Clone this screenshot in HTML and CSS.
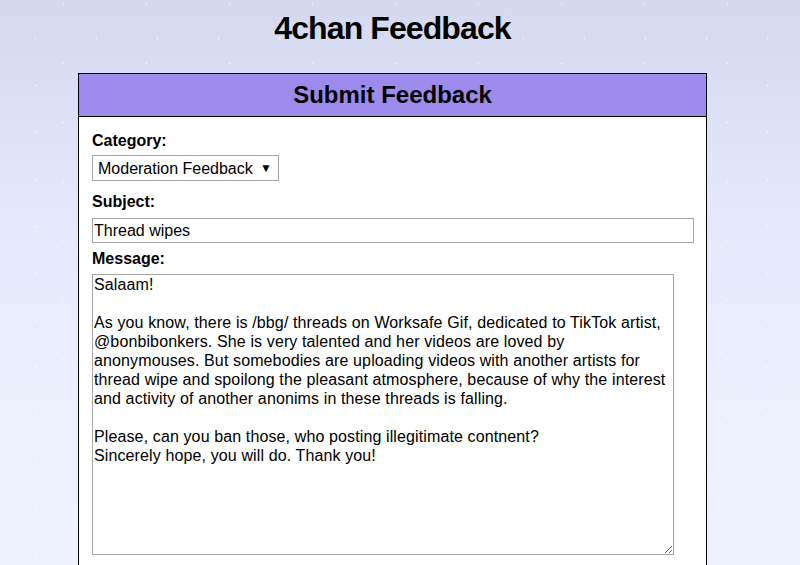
FILE: index.html
```html
<!DOCTYPE html>
<html lang="en">
<head>
    <meta charset="UTF-8">
    <meta name="viewport" content="width=device-width, initial-scale=1.0">
    <title>4chan Feedback</title>

    <link rel="stylesheet" href="styles.css">
</head>

<body>
  <div class="page">
    <h1 class="title">4chan Feedback</h1>

    <div class="container">
      <div class="header">Submit Feedback</div>

      <form class="form">
        <label class="label" for="category">Category:</label>
        <div class="select-wrap">
          <select id="category" class="select">
            <option>Moderation Feedback</option>
            <option>Site Feedback</option>
            <option>Other</option>
          </select>
        </div>

        <label class="label" for="subject">Subject:</label>
        <input id="subject" class="input" type="text" value="Thread wipes">

        <label class="label" for="message">Message:</label>
        <textarea id="message" class="textarea">Salaam!

As you know, there is /bbg/ threads on Worksafe Gif, dedicated to TikTok artist,
@bonbibonkers. She is very talented and her videos are loved by
anonymouses. But somebodies are uploading videos with another artists for
thread wipe and spoilong the pleasant atmosphere, because of why the interest
and activity of another anonims in these threads is falling.

Please, can you ban those, who posting illegitimate contnent?
Sincerely hope, you will do. Thank you!</textarea>
      </form>
    </div>
  </div>
</body>
</html>
```

FILE: styles.css
```css
html {
  min-height: 100%;
}

body {
  margin: 0;
  font-family: "Liberation Sans", Arial, sans-serif;
  color: #000;
  background-color: #e6eafa;
  background-image:
    radial-gradient(circle, rgba(255,255,255,0.7) 0.8px, transparent 1.2px),
    radial-gradient(circle, rgba(255,255,255,0.6) 0.8px, transparent 1.2px),
    linear-gradient(to bottom, #d5d9f0 0px, #e3e7f9 200px, #ecf0fd 400px, #eef2fe 565px);
  background-size: 61px 47px, 83px 59px, 100% 100%;
  background-position: 5px 250px, 22px 270px, 0 0;
  background-repeat: repeat, repeat, no-repeat;
  min-height: 565px;
}

.page {
  width: 785px;
  padding-bottom: 40px;
}

.title {
  margin: 0 0 9px;
  padding-top: 10px;
  height: 64px;
  box-sizing: border-box;
  text-align: center;
  font-size: 32px;
  font-weight: bold;
  letter-spacing: -0.9px;
  line-height: 37px;
}

.container {
  width: 627px;
  margin: 0 auto;
  border: 1px solid #000;
  background: #fff;
}

.header {
  height: 42px;
  line-height: 42px;
  background: #9c8aec;
  border-bottom: 1px solid #000;
  text-align: center;
  font-size: 24px;
  font-weight: bold;
}

.form {
  display: flex;
  flex-direction: column;
  align-items: flex-start;
  padding: 15px 0 40px 13px;
}

.label {
  display: block;
  font-size: 16px;
  font-weight: bold;
  line-height: 18px;
  margin-bottom: 5px;
}

.select-wrap {
  position: relative;
  margin-bottom: 12px;
}

.select-wrap::after {
  content: "\25BC";
  position: absolute;
  right: 7px;
  top: 6px;
  font-size: 12px;
  pointer-events: none;
}

.select {
  display: block;
  appearance: none;
  -webkit-appearance: none;
  width: 187px;
  height: 26px;
  box-sizing: border-box;
  border: 1px solid #a6a6a6;
  border-radius: 0;
  background: #fff;
  margin: 0;
  padding: 0 0 0 5px;
  font-family: "Liberation Sans", Arial, sans-serif;
  font-size: 16px;
  color: #000;
}

.input {
  display: block;
  width: 602px;
  height: 25px;
  box-sizing: border-box;
  border: 1px solid #a6a6a6;
  padding: 0 1px;
  margin: 2px 0 7px;
  font-family: "Liberation Sans", Arial, sans-serif;
  font-size: 16px;
  color: #000;
  outline: none;
}

.textarea {
  display: block;
  width: 582px;
  height: 281px;
  box-sizing: border-box;
  border: 1px solid #a6a6a6;
  padding: 0 1px;
  margin: 1px 0 0;
  font-family: "Liberation Sans", Arial, sans-serif;
  font-size: 16px;
  letter-spacing: 0.12px;
  line-height: 19px;
  color: #000;
  outline: none;
  resize: both;
}
```
